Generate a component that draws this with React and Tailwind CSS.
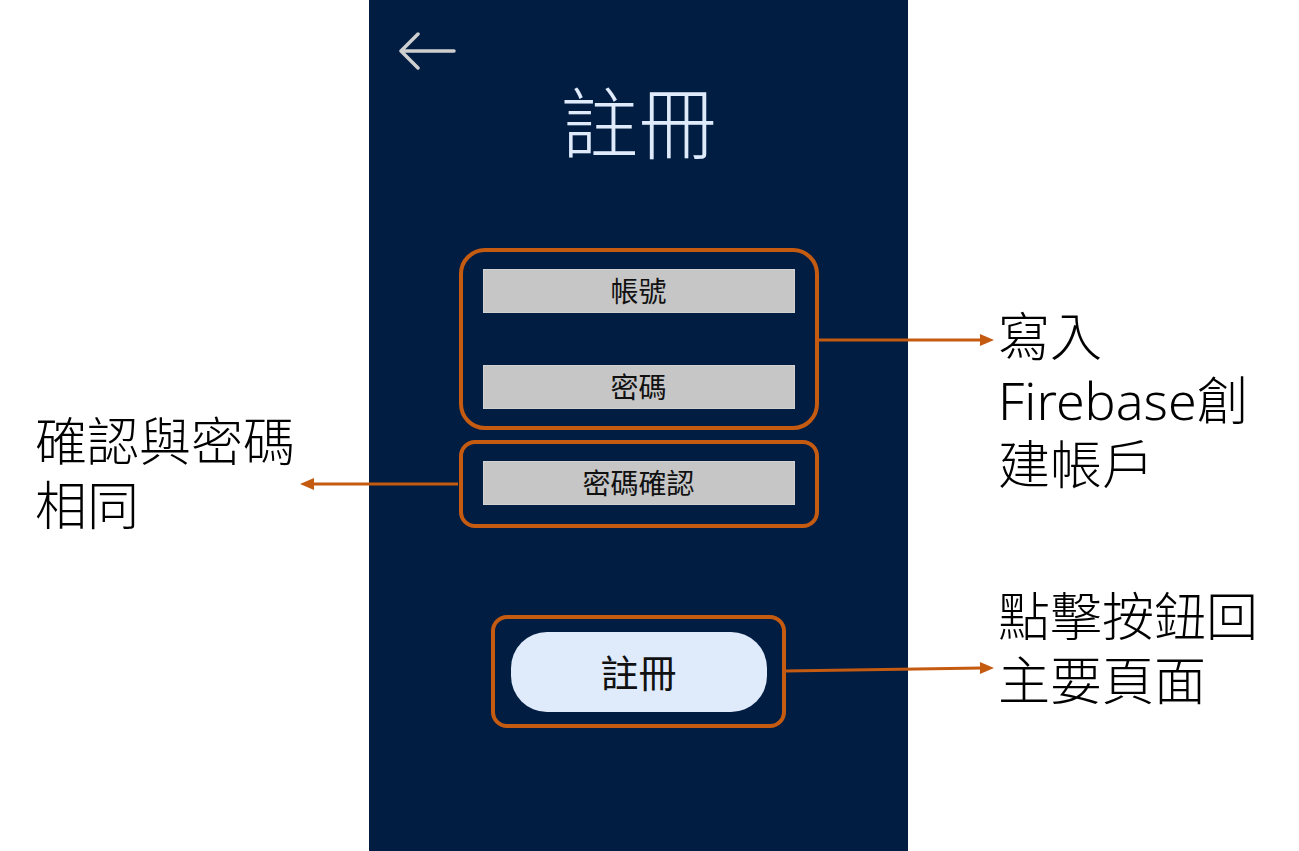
import React from "react";

const cjk = { fontFamily: '"Noto Sans", "Noto Sans CJK TC", sans-serif' };

function Field({ label }) {
  return (
    <div className="h-[44px] w-[312px] bg-[#c6c6c6] border border-[#d2d2d2] flex items-center justify-center text-[28px] leading-none text-[#111]">
      {label}
    </div>
  );
}

function Arrows() {
  const c = "#C55A11";
  return (
    <svg
      className="absolute inset-0 pointer-events-none"
      width="1299"
      height="851"
      viewBox="0 0 1299 851"
    >
      {/* 寫入 Firebase */}
      <line x1="819" y1="340" x2="982" y2="340" stroke={c} strokeWidth="3" />
      <polygon points="994,340 980,334 980,346" fill={c} />
      {/* 確認與密碼相同 */}
      <line x1="458" y1="484" x2="312" y2="484" stroke={c} strokeWidth="3" />
      <polygon points="300,484 314,478 314,490" fill={c} />
      {/* 點擊按鈕 */}
      <line x1="785" y1="671" x2="982" y2="668" stroke={c} strokeWidth="3" />
      <polygon points="994,668 980,662 980,674" fill={c} />
    </svg>
  );
}

export default function App() {
  return (
    <div className="relative w-[1299px] h-[851px] bg-white flex overflow-hidden" style={cjk}>
      {/* left note */}
      <div className="w-[369px] pl-[35px] pt-[409px] text-[52px] leading-[64px] font-light text-black">
        <div>確認與密碼</div>
        <div>相同</div>
      </div>

      {/* phone screen */}
      <div className="w-[539px] h-[851px] bg-[#011d42] flex flex-col items-center">
        <div className="self-start ml-[30px] mt-[32px] h-[37px]">
          <svg width="58" height="38" viewBox="0 0 58 38" fill="none" stroke="#cfcfcf" strokeWidth="3.5" strokeLinecap="round" strokeLinejoin="round">
            <path d="M3 19 H55" />
            <path d="M19 2 L2 19 L19 36" />
          </svg>
        </div>
        <h1 className="mt-[15px] text-[78px] leading-[78px] font-light text-[#dfeafa]">註冊</h1>

        <div className="mt-[86px] w-[360px] h-[182px] border-[4px] border-[#C55A11] rounded-[26px] pt-[17px] px-[20px] flex flex-col gap-[52px]">
          <Field label="帳號" />
          <Field label="密碼" />
        </div>

        <div className="mt-[10px] w-[360px] h-[88px] border-[4px] border-[#C55A11] rounded-[16px] pt-[17px] px-[20px]">
          <Field label="密碼確認" />
        </div>

        <div className="mt-[87px] w-[295px] h-[113px] border-[4px] border-[#C55A11] rounded-[16px] flex items-center justify-center">
          <button className="w-[256px] h-[80px] rounded-[36px] bg-[#dfeafa] text-[38px] leading-none text-[#111]">
            註冊
          </button>
        </div>
      </div>

      {/* right notes */}
      <div className="flex-1 pl-[90px] pt-[304px] text-[52px] leading-[64px] font-light text-black">
        <div>寫入</div>
        <div>Firebase創</div>
        <div>建帳戶</div>
        <div className="mt-[88px]">點擊按鈕回</div>
        <div>主要頁面</div>
      </div>

      <Arrows />
    </div>
  );
}
